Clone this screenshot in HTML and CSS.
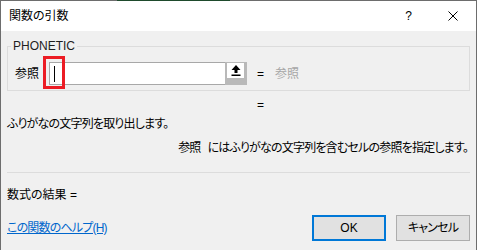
FILE: index.html
```html
<!DOCTYPE html>
<html lang="ja">
<head>
  <meta charset="UTF-8" />
  <title>関数の引数</title>
  <link rel="stylesheet" href="styles.css">
</head>
<body>
  <div class="dialog">
    <div class="titlebar">
      <span class="title">関数の引数</span>
      <span class="help">?</span>
      <svg class="close" width="10" height="10" viewBox="0 0 10 10">
        <path d="M0.5 0.5 L9.5 9.5 M9.5 0.5 L0.5 9.5" stroke="#000" stroke-width="1" fill="none"/>
      </svg>
    </div>

    <div class="content">
      <fieldset class="group">
        <legend>PHONETIC</legend>
        <div class="arg-row">
          <label class="arg-label">参照</label>
          <div class="ref-box">
            <div class="ref-input"><span class="caret"></span></div>
            <span class="ref-btn">
              <span class="ref-btn-face">
                <svg width="10" height="11" viewBox="0 0 10 11">
                  <path d="M5 0 L9.5 5 L6.5 5 L6.5 8 L3.5 8 L3.5 5 L0.5 5 Z" fill="#000"/>
                  <rect x="0.5" y="9.5" width="9" height="1.5" fill="#000"/>
                </svg>
              </span>
            </span>
            <span class="mark"></span>
          </div>
          <span class="eq">=</span>
          <span class="arg-value">参照</span>
        </div>
      </fieldset>

      <div class="eq-line">=</div>
      <div class="desc tight">ふりがなの文字列を取り出します。</div>
      <div class="arg-desc tight"><span>参照</span><span class="arg-text">にはふりがなの文字列を含むセルの参照を指定します。</span></div>

      <div class="sep"></div>

      <div class="result">数式の結果 =</div>

      <div class="footer">
        <a class="help-link tight" href="#">この関数のヘルプ(H)</a>
        <div class="buttons">
          <button class="btn btn-ok">OK</button>
          <button class="btn tight">キャンセル</button>
        </div>
      </div>
    </div>
  </div>
</body>
</html>
```

FILE: styles.css
```css
* { box-sizing: border-box; }

body {
  margin: 0;
  background: #ffffff;
}

.dialog {
  position: relative;
  width: 477px;
  height: 250px;
  border: 1px solid #6d6d6d;
  border-bottom: none;
  background: #f0f0f0;
  font-family: "Liberation Sans", "Noto Sans CJK JP", sans-serif;
  font-size: 12px;
  line-height: 16px;
  color: #000;
  font-feature-settings: "palt";
}

/* excel window peeking behind the dialog */
.dialog::before {
  content: "";
  position: absolute;
  top: -1px;
  left: 116px;
  width: 113px;
  height: 1px;
  background: #1e4a2c;
}

.tight {
  letter-spacing: -0.8px;
}

.titlebar {
  display: flex;
  align-items: center;
  height: 30px;
  padding: 0 18px 0 8px;
  background: #ffffff;
}

.help {
  margin-left: auto;
  font-size: 12px;
}

.close {
  margin-left: 36px;
}

.content {
  padding: 0 6px;
}

.group {
  margin: 7px 0 0;
  padding: 8px 0 5px;
  border: 1px solid #dcdcdc;
}

.group legend {
  margin-left: 3px;
  padding: 0 2px;
  color: #1e1e1e;
  line-height: 16px;
}

.arg-row {
  display: flex;
  align-items: center;
  height: 23px;
  padding-left: 7px;
}

.arg-label {
  width: 34px;
}

.ref-box {
  position: relative;
  display: flex;
  height: 23px;
}

.ref-input {
  width: 176px;
  height: 23px;
  background: #ffffff;
  border: 1px solid #a8a8a8;
  border-right: none;
  padding: 3px 0 0 4px;
}

.caret {
  display: block;
  width: 1px;
  height: 16px;
  background: #000;
}

.ref-btn {
  width: 22px;
  height: 23px;
  background: #b9b9b9;
  padding: 1px 0 0 2px;
}

.ref-btn-face {
  display: flex;
  align-items: center;
  justify-content: center;
  width: 17px;
  height: 15px;
  background: #ffffff;
}

.mark {
  position: absolute;
  left: -6px;
  top: -6px;
  width: 22px;
  height: 33px;
  border: 3px solid #ec1c24;
}

.eq {
  margin-left: 10px;
}

.arg-value {
  margin-left: 11px;
  color: #a6a6a6;
}

.eq-line {
  margin-top: 6px;
  padding-left: 250px;
}

.desc {
  margin-top: 3px;
}

.arg-desc {
  display: flex;
  justify-content: flex-end;
  margin-top: 8px;
  padding-right: 2px;
}

.arg-text {
  margin-left: 7px;
}

.sep {
  height: 1px;
  margin-top: 16px;
  background: #dcdcdc;
}

.result {
  margin-top: 14px;
}

.footer {
  display: flex;
  align-items: center;
  height: 26px;
  margin-top: 12px;
}

.help-link {
  color: #0066cc;
  text-decoration: underline;
}

.buttons {
  display: flex;
  gap: 10px;
  margin-left: auto;
}

.btn {
  width: 74px;
  height: 26px;
  padding: 0;
  background: #e1e1e1;
  border: 1px solid #adadad;
  font: inherit;
  color: #000;
}

.btn.tight {
  letter-spacing: -0.8px;
}

.btn-ok {
  border: 2px solid #0078d7;
}
```
